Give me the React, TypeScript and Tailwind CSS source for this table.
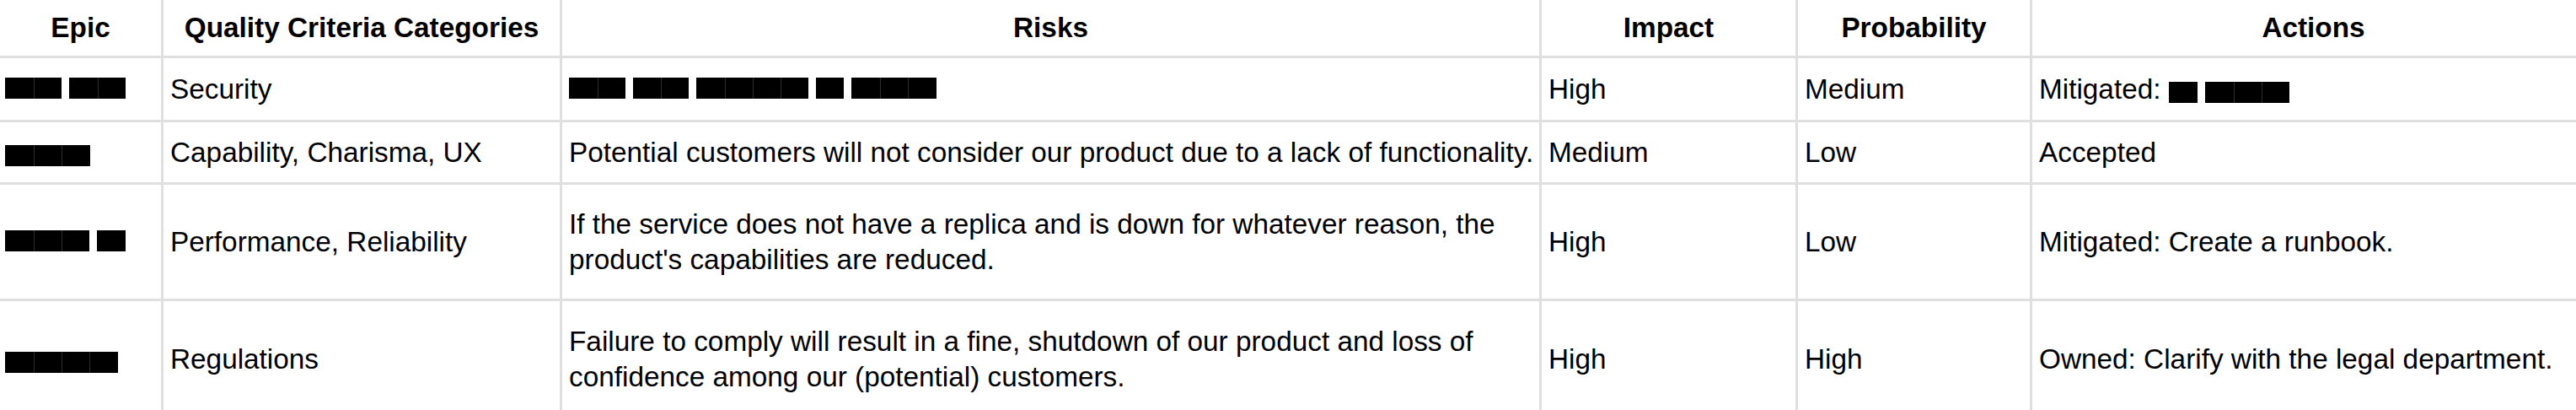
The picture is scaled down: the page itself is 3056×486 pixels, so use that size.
import React from "react";

const font = "font-['Liberation_Sans',Arial,Helvetica,sans-serif]";

function Redact({ segs }: { segs: number[] }) {
  return (
    <span className="inline-flex align-[-5px] h-[25px]">
      {segs.map((w, i) => (
        <span
          key={i}
          className={
            i === 0
              ? "block h-[25px] bg-black"
              : "block h-[25px] bg-black border-l border-[#2e2e2e]"
          }
          style={{ width: w }}
        />
      ))}
    </span>
  );
}

function Cell({ children, head = false, first = false }: { children: React.ReactNode; head?: boolean; first?: boolean }) {
  return (
    <div
      className={
        head
          ? "bg-white flex items-center justify-center font-bold"
          : first
          ? "bg-white flex items-center pl-[6px] pr-[7px]"
          : "bg-white flex items-center px-[8px]"
      }
    >
      <div className={head ? "text-center whitespace-nowrap" : "whitespace-nowrap"}>{children}</div>
    </div>
  );
}

export default function App() {
  return (
    <div className={`w-[3056px] h-[486px] overflow-hidden bg-white text-black text-[33.35px] leading-[42px] ${font}`}>
      <div className="grid w-max grid-cols-[191px_470px_1159px_301px_275px_667px] grid-rows-[66px_73px_71px_135px_137px] gap-[3px] bg-[#dfdfdf]">
        <Cell head>Epic</Cell>
        <Cell head>Quality Criteria Categories</Cell>
        <Cell head>Risks</Cell>
        <Cell head>Impact</Cell>
        <Cell head>Probability</Cell>
        <Cell head>Actions</Cell>

        <Cell first>
          <span className="inline-flex gap-[9px]">
            <Redact segs={[34, 33]} />
            <Redact segs={[34, 33]} />
          </span>
        </Cell>
        <Cell>Security</Cell>
        <Cell>
          <span className="inline-flex gap-[9px]">
            <Redact segs={[34, 33]} />
            <Redact segs={[33, 33]} />
            <Redact segs={[34, 33, 33, 33]} />
            <Redact segs={[33]} />
            <Redact segs={[34, 33, 34]} />
          </span>
        </Cell>
        <Cell>High</Cell>
        <Cell>Medium</Cell>
        <Cell>
          Mitigated: <Redact segs={[34]} /> <Redact segs={[34, 33, 33]} />
        </Cell>

        <Cell first>
          <Redact segs={[34, 33, 34]} />
        </Cell>
        <Cell>Capability, Charisma, UX</Cell>
        <Cell>Potential customers will not consider our product due to a lack of functionality.</Cell>
        <Cell>Medium</Cell>
        <Cell>Low</Cell>
        <Cell>Accepted</Cell>

        <Cell first>
          <span className="inline-flex gap-[9px]">
            <Redact segs={[34, 33, 33]} />
            <Redact segs={[34]} />
          </span>
        </Cell>
        <Cell>Performance, Reliability</Cell>
        <Cell>
          If the service does not have a replica and is down for whatever reason, the
          <br />
          product's capabilities are reduced.
        </Cell>
        <Cell>High</Cell>
        <Cell>Low</Cell>
        <Cell>Mitigated: Create a runbook.</Cell>

        <Cell first>
          <Redact segs={[34, 33, 33, 34]} />
        </Cell>
        <Cell>Regulations</Cell>
        <Cell>
          Failure to comply will result in a fine, shutdown of our product and loss of
          <br />
          confidence among our (potential) customers.
        </Cell>
        <Cell>High</Cell>
        <Cell>High</Cell>
        <Cell>Owned: Clarify with the legal department.</Cell>
      </div>
    </div>
  );
}
